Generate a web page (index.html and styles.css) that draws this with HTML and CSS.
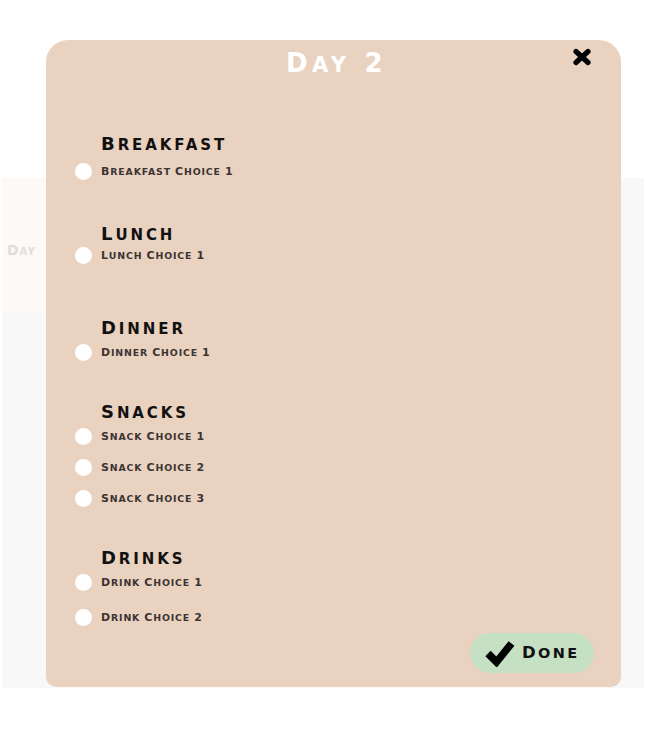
FILE: index.html
```html
<!DOCTYPE html>
<html lang="en">
<head>
<meta charset="utf-8">
<title>Day 2</title>
<link rel="stylesheet" href="styles.css">
</head>
<body>
<div class="page">
  <div class="backdrop">
    <div class="backdrop-row backdrop-row--day"><span class="backdrop-label">Day</span></div>
  </div>

  <div class="modal">
    <h1 class="modal-title"><span class="w">Day</span> <span class="w">2</span></h1>
    <button class="modal-close" aria-label="Close">
      <svg width="20" height="18" viewBox="0 0 20 18"><path d="M4 3.5 L16 14.5 M16 3.5 L4 14.5" stroke="#000" stroke-width="5.2" stroke-linecap="round"/></svg>
    </button>

    <div class="meals">
      <section class="meal meal--breakfast">
        <h2 class="meal-title">Breakfast</h2>
        <label class="choice"><span class="radio"></span><span class="choice-text"><span class="w">Breakfast</span> <span class="w">Choice</span> <span class="w">1</span></span></label>
      </section>
      <section class="meal meal--lunch">
        <h2 class="meal-title">Lunch</h2>
        <label class="choice"><span class="radio"></span><span class="choice-text"><span class="w">Lunch</span> <span class="w">Choice</span> <span class="w">1</span></span></label>
      </section>
      <section class="meal meal--dinner">
        <h2 class="meal-title">Dinner</h2>
        <label class="choice"><span class="radio"></span><span class="choice-text"><span class="w">Dinner</span> <span class="w">Choice</span> <span class="w">1</span></span></label>
      </section>
      <section class="meal meal--snacks">
        <h2 class="meal-title">Snacks</h2>
        <label class="choice"><span class="radio"></span><span class="choice-text"><span class="w">Snack</span> <span class="w">Choice</span> <span class="w">1</span></span></label>
        <label class="choice"><span class="radio"></span><span class="choice-text"><span class="w">Snack</span> <span class="w">Choice</span> <span class="w">2</span></span></label>
        <label class="choice"><span class="radio"></span><span class="choice-text"><span class="w">Snack</span> <span class="w">Choice</span> <span class="w">3</span></span></label>
      </section>
      <section class="meal meal--drinks">
        <h2 class="meal-title">Drinks</h2>
        <label class="choice"><span class="radio"></span><span class="choice-text"><span class="w">Drink</span> <span class="w">Choice</span> <span class="w">1</span></span></label>
        <label class="choice"><span class="radio"></span><span class="choice-text"><span class="w">Drink</span> <span class="w">Choice</span> <span class="w">2</span></span></label>
      </section>
    </div>

    <div class="modal-footer">
      <button class="done-btn">
        <svg class="done-icon" width="32" height="28" viewBox="0 0 32 28"><path d="M4 14.5 L12.5 23 L27.5 4.5" fill="none" stroke="#000" stroke-width="7.5" stroke-linejoin="miter" stroke-linecap="butt"/></svg>
        <span class="done-text">Done</span>
      </button>
    </div>
  </div>
</div>
</body>
</html>
```

FILE: styles.css
```css
* { box-sizing: border-box; }

html, body {
  margin: 0;
  padding: 0;
  background: #ffffff;
}

body {
  font-family: "DejaVu Sans", "Liberation Sans", sans-serif;
}

.page {
  position: relative;
  width: 647px;
  height: 733px;
  overflow: hidden;
}

/* underlying page */
.backdrop {
  margin: 178px 0 0 2px;
  width: 642px;
  height: 510px;
  background: #f8f8f8;
  display: flex;
  flex-direction: column;
}

.backdrop-row--day {
  width: 320px;
  height: 134px;
  background: #fdf9f7;
  display: flex;
  align-items: center;
  padding: 10px 0 0 5px;
}

.backdrop-label {
  font-variant: small-caps;
  font-weight: bold;
  font-size: 14px;
  letter-spacing: 1px;
  color: #dedede;
}

/* modal */
.modal {
  position: absolute;
  left: 46px;
  top: 40px;
  width: 575px;
  height: 647px;
  background: #ead2c0;
  border-radius: 22px 22px 10px 10px;
  padding: 8px 27px 14px 29px;
  display: flex;
  flex-direction: column;
}

.w { display: inline-block; }

.modal-title {
  margin: 0;
  text-align: center;
  color: #ffffff;
  font-size: 21px;
  line-height: 30px;
  height: 30px;
  font-weight: bold;
  text-transform: uppercase;
  letter-spacing: 4.5px;
  word-spacing: 2px;
  padding-left: 4px;
}

.modal-title .w::first-letter { font-size: 26px; }

.modal-close {
  position: absolute;
  right: 29px;
  top: 8px;
  width: 20px;
  height: 18px;
  padding: 0;
  border: 0;
  background: none;
  display: block;
}

.modal-close svg { display: block; }

.meals {
  margin-top: 56px;
  display: flex;
  flex-direction: column;
}

.meal {
  display: flex;
  flex-direction: column;
  gap: 14px;
}

.meal + .meal { margin-top: 41px; }
.meal + .meal--lunch { margin-top: 44px; }
.meal + .meal--dinner { margin-top: 54px; }
.meal--breakfast .meal-title { margin-bottom: -5px; }
.meal--lunch .meal-title { margin-bottom: -11px; }
.meal--drinks { gap: 18px; }
.meal--drinks .meal-title { margin-bottom: -12px; }

.meal-title {
  margin: 0 0 -8px 26px;
  height: 20px;
  font-size: 15px;
  line-height: 20px;
  font-weight: bold;
  text-transform: uppercase;
  letter-spacing: 2.9px;
  color: #111111;
}

.meal-title::first-letter { font-size: 18px; }

.choice {
  display: flex;
  align-items: center;
  gap: 9px;
  height: 17px;
}

.radio {
  width: 17px;
  height: 17px;
  border-radius: 50%;
  background: #ffffff;
  flex: none;
}

.choice-text {
  font-size: 9.4px;
  line-height: 17px;
  font-weight: bold;
  text-transform: uppercase;
  letter-spacing: 0.85px;
  color: #3a3534;
  white-space: nowrap;
}

.choice-text .w::first-letter { font-size: 11px; }

.modal-footer {
  margin-top: auto;
  display: flex;
  justify-content: flex-end;
}

.done-btn {
  width: 124px;
  height: 40px;
  border: 0;
  border-radius: 20px;
  background: #c6e0c4;
  display: flex;
  align-items: center;
  gap: 6px;
  padding: 0 0 0 14px;
  font-family: inherit;
}

.done-icon { display: block; flex: none; }

.done-text {
  font-size: 14.5px;
  font-weight: bold;
  text-transform: uppercase;
  letter-spacing: 2.4px;
  color: #111111;
  line-height: 20px;
}

.done-text::first-letter { font-size: 16.5px; }
```
